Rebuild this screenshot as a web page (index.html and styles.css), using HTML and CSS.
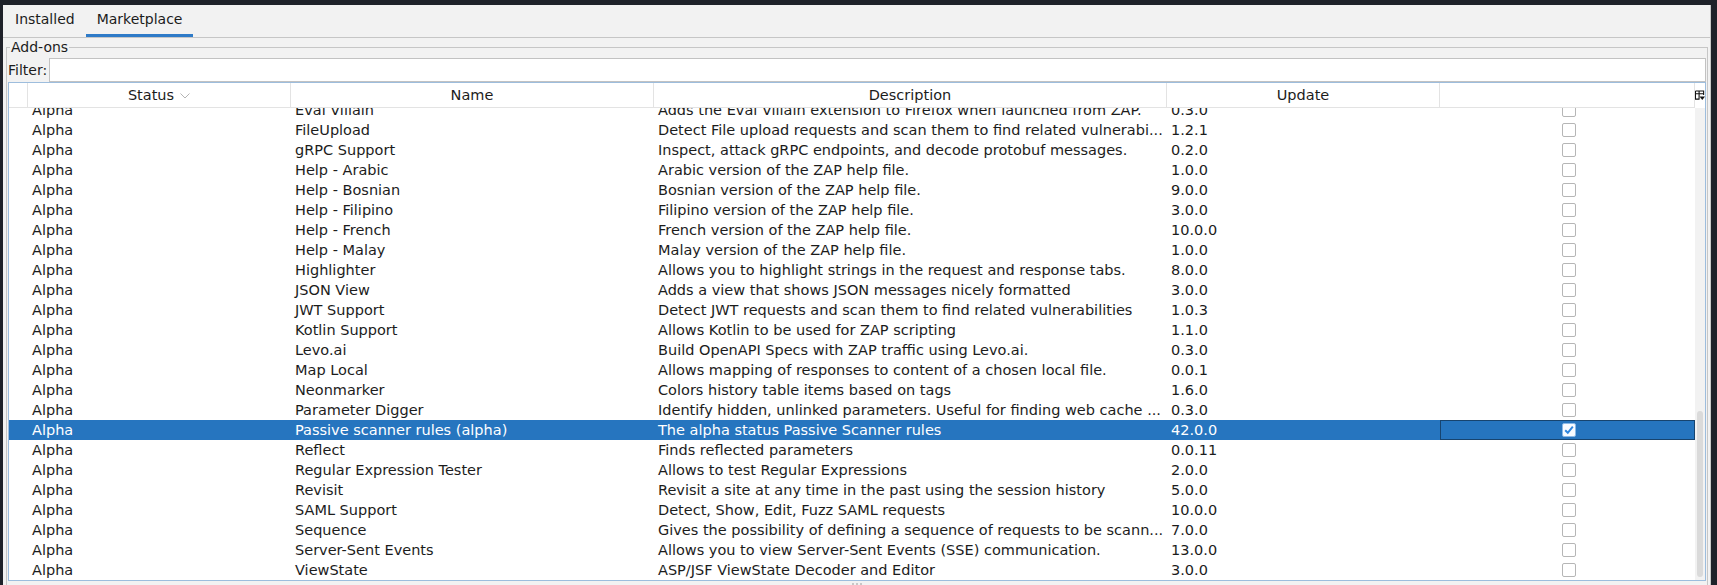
FILE: index.html
```html
<!DOCTYPE html>
<html>
<head>
<meta charset="utf-8">
<link rel="stylesheet" href="styles.css">
</head>
<body>
<div class="window">
  <div class="tabs">
    <div class="tab">Installed</div>
    <div class="tab active">Marketplace</div>
  </div>
  <fieldset class="addons">
    <legend>Add-ons</legend>
    <div class="filter"><span class="filter-label">Filter:</span><div class="input"></div></div>
    <div class="table">
      <div class="thead">
        <div class="th"></div>
        <div class="th">Status<svg class="chev" width="10" height="6" viewBox="0 0 10 6"><path d="M0.5 0.5 L5 5 L9.5 0.5" fill="none" stroke="#b4b4b4" stroke-width="1"/></svg></div>
        <div class="th">Name</div>
        <div class="th">Description</div>
        <div class="th">Update</div>
        <div class="th"></div>
        <div class="th corner"><svg width="11" height="11" viewBox="0 0 11 11"><path d="M0.5 0.5 H9.5 V5 M0.5 0.5 V9.5 H5 M0.5 3.5 H9.5 M4.5 0.5 V9" fill="none" stroke="#111" stroke-width="1.2"/><path d="M5 6.5 H11 L8 10.5 Z" fill="#111"/></svg></div>
      </div>
      <div class="tbody-wrap">
        <div class="tbody">
          <div class="row first"><div></div><div>Alpha</div><div>Eval Villain</div><div>Adds the Eval Villain extension to Firefox when launched from ZAP.</div><div>0.3.0</div><div class="chk"><span class="box"></span></div></div>
          <div class="row"><div></div><div>Alpha</div><div>FileUpload</div><div>Detect File upload requests and scan them to find related vulnerabi...</div><div>1.2.1</div><div class="chk"><span class="box"></span></div></div>
          <div class="row"><div></div><div>Alpha</div><div>gRPC Support</div><div>Inspect, attack gRPC endpoints, and decode protobuf messages.</div><div>0.2.0</div><div class="chk"><span class="box"></span></div></div>
          <div class="row"><div></div><div>Alpha</div><div>Help - Arabic</div><div>Arabic version of the ZAP help file.</div><div>1.0.0</div><div class="chk"><span class="box"></span></div></div>
          <div class="row"><div></div><div>Alpha</div><div>Help - Bosnian</div><div>Bosnian version of the ZAP help file.</div><div>9.0.0</div><div class="chk"><span class="box"></span></div></div>
          <div class="row"><div></div><div>Alpha</div><div>Help - Filipino</div><div>Filipino version of the ZAP help file.</div><div>3.0.0</div><div class="chk"><span class="box"></span></div></div>
          <div class="row"><div></div><div>Alpha</div><div>Help - French</div><div>French version of the ZAP help file.</div><div>10.0.0</div><div class="chk"><span class="box"></span></div></div>
          <div class="row"><div></div><div>Alpha</div><div>Help - Malay</div><div>Malay version of the ZAP help file.</div><div>1.0.0</div><div class="chk"><span class="box"></span></div></div>
          <div class="row"><div></div><div>Alpha</div><div>Highlighter</div><div>Allows you to highlight strings in the request and response tabs.</div><div>8.0.0</div><div class="chk"><span class="box"></span></div></div>
          <div class="row"><div></div><div>Alpha</div><div>JSON View</div><div>Adds a view that shows JSON messages nicely formatted</div><div>3.0.0</div><div class="chk"><span class="box"></span></div></div>
          <div class="row"><div></div><div>Alpha</div><div>JWT Support</div><div>Detect JWT requests and scan them to find related vulnerabilities</div><div>1.0.3</div><div class="chk"><span class="box"></span></div></div>
          <div class="row"><div></div><div>Alpha</div><div>Kotlin Support</div><div>Allows Kotlin to be used for ZAP scripting</div><div>1.1.0</div><div class="chk"><span class="box"></span></div></div>
          <div class="row"><div></div><div>Alpha</div><div>Levo.ai</div><div>Build OpenAPI Specs with ZAP traffic using Levo.ai.</div><div>0.3.0</div><div class="chk"><span class="box"></span></div></div>
          <div class="row"><div></div><div>Alpha</div><div>Map Local</div><div>Allows mapping of responses to content of a chosen local file.</div><div>0.0.1</div><div class="chk"><span class="box"></span></div></div>
          <div class="row"><div></div><div>Alpha</div><div>Neonmarker</div><div>Colors history table items based on tags</div><div>1.6.0</div><div class="chk"><span class="box"></span></div></div>
          <div class="row"><div></div><div>Alpha</div><div>Parameter Digger</div><div>Identify hidden, unlinked parameters. Useful for finding web cache ...</div><div>0.3.0</div><div class="chk"><span class="box"></span></div></div>
          <div class="row selected"><div></div><div>Alpha</div><div>Passive scanner rules (alpha)</div><div>The alpha status Passive Scanner rules</div><div>42.0.0</div><div class="chk focus"><span class="box checked"><svg width="12" height="12" viewBox="0 0 12 12"><path d="M2.2 6.2 L4.8 8.8 L9.8 2.6" fill="none" stroke="#2f86de" stroke-width="2"/></svg></span></div></div>
          <div class="row"><div></div><div>Alpha</div><div>Reflect</div><div>Finds reflected parameters</div><div>0.0.11</div><div class="chk"><span class="box"></span></div></div>
          <div class="row"><div></div><div>Alpha</div><div>Regular Expression Tester</div><div>Allows to test Regular Expressions</div><div>2.0.0</div><div class="chk"><span class="box"></span></div></div>
          <div class="row"><div></div><div>Alpha</div><div>Revisit</div><div>Revisit a site at any time in the past using the session history</div><div>5.0.0</div><div class="chk"><span class="box"></span></div></div>
          <div class="row"><div></div><div>Alpha</div><div>SAML Support</div><div>Detect, Show, Edit, Fuzz SAML requests</div><div>10.0.0</div><div class="chk"><span class="box"></span></div></div>
          <div class="row"><div></div><div>Alpha</div><div>Sequence</div><div>Gives the possibility of defining a sequence of requests to be scann...</div><div>7.0.0</div><div class="chk"><span class="box"></span></div></div>
          <div class="row"><div></div><div>Alpha</div><div>Server-Sent Events</div><div>Allows you to view Server-Sent Events (SSE) communication.</div><div>13.0.0</div><div class="chk"><span class="box"></span></div></div>
          <div class="row"><div></div><div>Alpha</div><div>ViewState</div><div>ASP/JSF ViewState Decoder and Editor</div><div>3.0.0</div><div class="chk"><span class="box"></span></div></div>
        </div>
        <div class="scrollbar"><div class="thumb"></div></div>
      </div>
    </div>
    <div class="splitter"><span></span><span></span><span></span></div>
  </fieldset>
</div>
</body>
</html>
```

FILE: styles.css
```css
html, body {
  margin: 0;
  padding: 0;
  height: 100%;
  background: #1f222a;
  overflow: hidden;
}
body {
  font-family: "DejaVu Sans", sans-serif;
  font-size: 14.5px;
  color: #1c1c1c;
}
.window {
  margin: 5px 6px 0 3px;
  height: 580px;
  background: #f2f2f2;
  overflow: hidden;
  border-right: 1px solid #c8c8c8;
  box-sizing: border-box;
}
.tabs {
  display: flex;
  height: 32px;
  border-bottom: 1px solid #c6c6c6;
  padding-left: 1px;
  font-size: 14px;
}
.tab {
  padding: 0 11px;
  line-height: 29px;
  border-bottom: 3px solid transparent;
}
.tab.active {
  border-bottom-color: #2f7bc8;
}
.addons {
  margin: 1px 2px 0 3px;
  padding: 3px 1px 0 1px;
  border: 1px solid #c6c6c6;
  min-width: 0;
}
.addons legend {
  padding: 0 1px;
  margin-left: 2px;
  line-height: 16px;
  height: 16px;
  font-size: 14px;
}
.filter {
  display: flex;
  align-items: center;
  height: 24px;
  font-size: 14px;
}
.filter-label {
  width: 41px;
  flex: none;
  white-space: nowrap;
}
.input {
  flex: 1;
  height: 24px;
  box-sizing: border-box;
  background: #fff;
  border: 1px solid #c2c2c2;
}
.table {
  border: 1px solid #9dbddd;
  background: #fff;
}
.thead {
  display: grid;
  grid-template-columns: 19px 263px 363px 513px 273px 1fr 10px;
  height: 25px;
  box-sizing: border-box;
}
.th {
  border-right: 1px solid #e3e3e3;
  border-bottom: 1px solid #e3e3e3;
  display: flex;
  align-items: center;
  justify-content: center;
  color: #1c1c1c;
}
.th .chev {
  margin-left: 6px;
  margin-top: 2px;
}
.th.corner {
  border: none;
  background: #fff;
  justify-content: flex-start;
}
.tbody-wrap {
  display: flex;
  height: 472px;
  overflow: hidden;
}
.tbody {
  flex: 1;
  overflow: hidden;
}
.row {
  display: grid;
  grid-template-columns: 19px 263px 363px 513px 273px 1fr;
  height: 20px;
  line-height: 20px;
}
.row.first {
  margin-top: -8px;
}
.row > div {
  padding-left: 4px;
  white-space: nowrap;
  overflow: hidden;
}
.row.selected {
  background: #2675bf;
  color: #fff;
}
.row .chk {
  padding: 0;
  display: flex;
  align-items: center;
  justify-content: center;
  box-sizing: border-box;
}
.row .chk.focus {
  border: 1px solid #17446f;
}
.box {
  width: 14px;
  height: 14px;
  box-sizing: border-box;
  border: 1px solid #b6b6b6;
  border-radius: 2px;
  background: #fff;
  display: flex;
  align-items: center;
  justify-content: center;
  margin-left: 3px;
}
.box.checked {
  border-color: #8ab8e6;
  background: #f8fbff;
}
.scrollbar {
  width: 10px;
  flex: none;
  background: #f2f2f2;
  display: flex;
  flex-direction: column;
  align-items: center;
}
.thumb {
  width: 6px;
  height: 166px;
  margin-top: 303px;
  border-radius: 3px;
  background: #dadada;
}
.splitter {
  display: flex;
  justify-content: center;
  gap: 2px;
  padding-top: 2px;
}
.splitter span {
  width: 2px;
  height: 2px;
  background: #b8b8b8;
  border-radius: 1px;
}
```
